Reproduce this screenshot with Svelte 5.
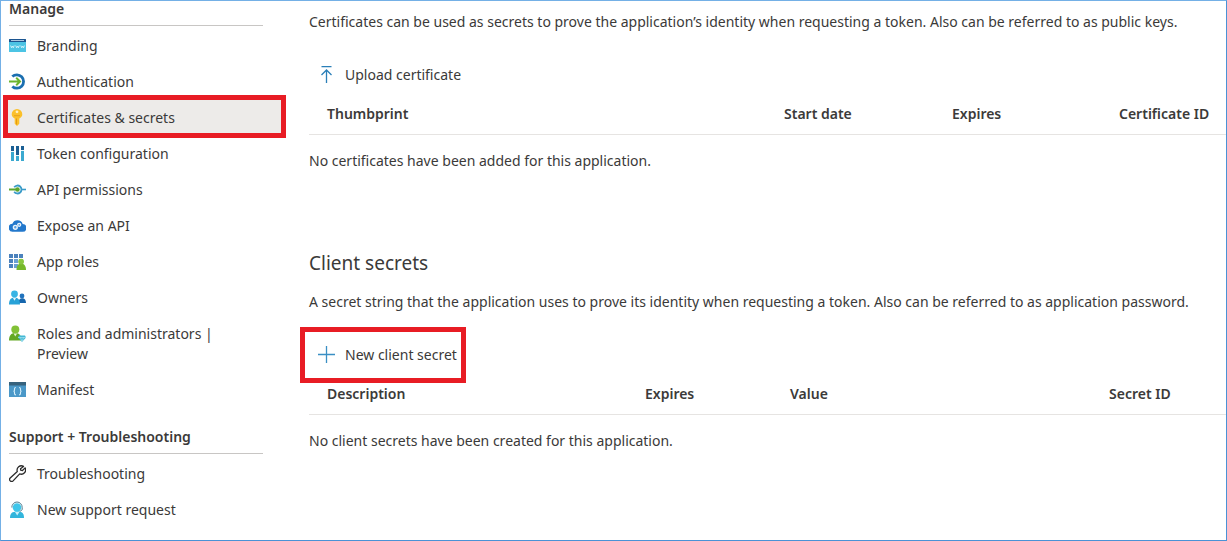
<script lang="ts">
  interface NavItem {
    icon: string;
    label: string;
    active?: boolean;
  }

  interface Column {
    label: string;
    width?: number;
  }

  const manageItems: NavItem[] = [
    { icon: "branding", label: "Branding" },
    { icon: "auth", label: "Authentication" },
    { icon: "key", label: "Certificates & secrets", active: true },
    { icon: "token", label: "Token configuration" },
    { icon: "permissions", label: "API permissions" },
    { icon: "cloud", label: "Expose an API" },
    { icon: "approles", label: "App roles" },
    { icon: "owners", label: "Owners" },
    { icon: "admin", label: "Roles and administrators | Preview" },
    { icon: "manifest", label: "Manifest" },
  ];

  const supportItems: NavItem[] = [
    { icon: "wrench", label: "Troubleshooting" },
    { icon: "support", label: "New support request" },
  ];

  const certificateColumns: Column[] = [
    { label: "Thumbprint" },
    { label: "Start date", width: 168 },
    { label: "Expires", width: 167 },
    { label: "Certificate ID", width: 125 },
  ];

  const secretColumns: Column[] = [
    { label: "Description" },
    { label: "Expires", width: 145 },
    { label: "Value", width: 319 },
    { label: "Secret ID", width: 135 },
  ];
</script>

{#snippet icon(name: string)}
  <svg class="icon" viewBox="0 0 17 17" aria-hidden="true">
    {#if name === "branding"}
      <rect y="2" width="17" height="13" rx="0.6" fill="#4cc4e4" />
      <path d="M0 5V2.600Q0 2 .6 2h15.800q.6 0 .6.600V5z" fill="#1c5590" />
      <rect x="2" y="3.200" width="13" height="0.800" fill="#cfe4f2" />
      <path
        d="M1.600 8.500l.9 2.300.9-1.800.9 1.800.9-2.300M6.700 8.500l.9 2.300.9-1.800.9 1.800.9-2.300M11.800 8.500l.9 2.300.9-1.800.9 1.800.9-2.300"
        fill="none"
        stroke="#d8f5fc"
        stroke-width="0.9"
      />
    {:else if name === "auth"}
      <path
        d="M3.300 3.600A6.700 6.700 0 1 1 3.300 13.400"
        fill="none"
        stroke="#1b6fb0"
        stroke-width="2.800"
      />
      <path
        d="M0 8.500h10.500M7.200 4.800l3.800 3.700-3.800 3.700"
        fill="none"
        stroke="#6bb42c"
        stroke-width="2"
      />
    {:else if name === "key"}
      <path
        d="M8 0a5.300 5.200 0 0 1 5.300 5.200c0 2-1.300 3.500-3 4.300v5.200L8 17l-2.300-2.300V9.500C4 8.700 2.700 7.200 2.700 5.200A5.300 5.200 0 0 1 8 0z"
        fill="#fbc02a"
      />
      <circle cx="8" cy="2.800" r="1.400" fill="#fff0c4" />
      <path d="M5 6.700h6" stroke="#e8a01c" />
      <path d="M7.500 9.500v6" stroke="#e59a12" />
    {:else if name === "token"}
      <path d="M3.500 1v15M8.500 1v15M13.500 1v15" stroke="#3aa9d0" stroke-width="3" />
      <path d="M3.500 1v5M8.500 1v9M13.500 1v4" stroke="#1b5f94" stroke-width="3" />
      <path d="M2 6.500h3M7 10.500h3M12 5.500h3" stroke="#e6f6fb" />
    {:else if name === "permissions"}
      <path
        d="M5.200 6.200A4 4 0 1 1 5.200 10.800"
        fill="none"
        stroke="#3a9bc8"
        stroke-width="1.800"
      />
      <path d="M12.500 8.500H17" stroke="#3a9bc8" stroke-width="1.600" />
      <path d="M0 8.500h7" stroke="#5ba52c" stroke-width="2" />
      <circle cx="8.500" cy="8.500" r="2.200" fill="#5ba52c" />
    {:else if name === "cloud"}
      <path
        d="M4 14.800a4 4 0 0 1-.6-8A5.500 5.500 0 0 1 13.700 7a3.900 3.900 0 0 1-.4 7.800z"
        fill="#2378cc"
      />
      <circle cx="6.300" cy="10.300" r="1.900" fill="#5aa0e0" stroke="#e9f3fc" stroke-width="1.400" />
      <circle cx="10.200" cy="7.800" r="1.500" fill="#5aa0e0" stroke="#e9f3fc" stroke-width="1.300" />
    {:else if name === "approles"}
      <path d="M0 1h4v4H0zM5 1h4v4H5zM10 1h4v4h-4zM0 6h4v4H0zM0 11h4v4H0z" fill="#4b82bd" />
      <path d="M5 6h4v4H5zM5 11h4v4H5zM10 6h4v4h-4z" fill="#6ba0d2" />
      <path d="M7.500 17c0-4 1.500-6.500 4.600-6.500S17 13 17 17z" fill="#76b82a" />
      <circle cx="12.100" cy="8.600" r="2.900" fill="#88c740" />
    {:else if name === "owners"}
      <path d="M9.500 14c0-3 1.200-4.800 3.700-4.800S17 11 17 14z" fill="#1666ad" />
      <circle cx="13" cy="7" r="2.400" fill="#2173bd" />
      <path d="M0 15.500C0 11 1.900 8.500 5.500 8.500S11 11 11 15.500z" fill="#28a2d8" />
      <path d="M3.800 8.800l1.700 3 1.700-3z" fill="#e6f6fc" />
      <circle cx="5.500" cy="5" r="3.400" fill="#38b4e4" />
    {:else if name === "admin"}
      <path d="M0 15.500C0 10.500 2 8 6.200 8s6.300 2.500 6.300 7.500z" fill="#62a823" />
      <path d="M4.500 8.200L6.300 11.500l1.900-3.300z" fill="#e2f3d0" />
      <circle cx="6.300" cy="4.500" r="4" fill="#82c136" />
      <path d="M10 10.500h6l1 2-4 4.500-4-4.500z" fill="#42b8d5" />
      <path d="M9 12.500h8M11.500 12.500L13 17l1.500-4.500" fill="none" stroke="#b9eaf3" stroke-width="0.6" />
    {:else if name === "manifest"}
      <rect y="1" width="17" height="15" fill="#4b98c8" />
      <rect y="1" width="17" height="3.500" fill="#37637e" />
      <path
        d="M6.900 6.500q-1.400 0-1.400 1.300v1.200q0 1-.9 1.200.9.200.9 1.200v1.200q0 1.300 1.400 1.300M10.100 6.500q1.400 0 1.400 1.300v1.200q0 1 .9 1.200-.9.200-.9 1.200v1.200q0 1.300-1.400 1.300"
        fill="none"
        stroke="#d5eefa"
        stroke-width="1.100"
      />
    {:else if name === "wrench"}
      <path
        d="M14.500 1.400A4.300 4.300 0 0 0 8.300 6.500L1.200 13a2 2 0 0 0 2.900 2.900L10.700 8.900a4.300 4.300 0 0 0 5.400-6L13.500 5.500 11.700 5.200 11.500 3.700z"
        fill="none"
        stroke="#2b2b2b"
        stroke-width="1.300"
        stroke-linejoin="round"
      />
    {:else if name === "support"}
      <path d="M1 17c0-4.500 2-6.500 7.200-6.500S15 12.500 15 17z" fill="#32b5dc" />
      <path d="M6 11l2.200 3.400 2.200-3.400z" fill="#c8f0fa" />
      <circle cx="8" cy="6.500" r="4.300" fill="#3fc6ea" />
      <path d="M2.800 6.500a5.200 5.500 0 0 1 10.400 0v2.200l-2.500 2" fill="none" stroke="#4f7d91" />
    {:else if name === "upload"}
      <path
        d="M3.500 0.500h10M8.500 17V4M3.500 9l5-5 5 5"
        fill="none"
        stroke="#2b7fb8"
        stroke-width="1.300"
      />
    {:else if name === "plus"}
      <path d="M8.500 0v17M0 8.500h17" stroke="#3a8fc4" stroke-width="1.300" />
    {/if}
  </svg>
{/snippet}

{#snippet navList(title: string, items: NavItem[])}
  <h2>{title}</h2>
  <ul>
    {#each items as item}
      <li>
        <a href="#{item.icon}" class:active={item.active} aria-current={item.active ? "page" : undefined}>
          {@render icon(item.icon)}
          <span>{item.label}</span>
        </a>
      </li>
    {/each}
  </ul>
{/snippet}

{#snippet dataTable(columns: Column[], empty: string)}
  <table>
    <colgroup>
      {#each columns as column}
        <col style:width={column.width ? `${column.width}px` : undefined} />
      {/each}
    </colgroup>
    <thead>
      <tr>
        {#each columns as column}
          <th scope="col">{column.label}</th>
        {/each}
      </tr>
    </thead>
    <tbody>
      <tr>
        <td colspan={columns.length}>{empty}</td>
      </tr>
    </tbody>
  </table>
{/snippet}

<div class="portal">
  <nav>
    {@render navList("Manage", manageItems)}
    {@render navList("Support + Troubleshooting", supportItems)}
  </nav>

  <main>
    <section>
      <p>
        Certificates can be used as secrets to prove the application’s identity when requesting a
        token. Also can be referred to as public keys.
      </p>
      <button type="button">
        {@render icon("upload")}
        Upload certificate
      </button>
      {@render dataTable(
        certificateColumns,
        "No certificates have been added for this application.",
      )}
    </section>

    <section>
      <h1>Client secrets</h1>
      <p>
        A secret string that the application uses to prove its identity when requesting a token.
        Also can be referred to as application password.
      </p>
      <button type="button" class="marked">
        {@render icon("plus")}
        New client secret
      </button>
      {@render dataTable(
        secretColumns,
        "No client secrets have been created for this application.",
      )}
    </section>
  </main>
</div>

<style>
  :global(body) {
    margin: 0;
    background: #fff;
  }

  .portal {
    --mark: #e81c24;
    --text: #3b3a39;

    box-sizing: border-box;
    display: flex;
    min-height: 100vh;
    border: 1px solid #4a92d6;
    border-top-color: #74b0e6;
    border-left-color: #74b0e6;
    font-family: "Noto Sans", "Open Sans", sans-serif;
    font-size: 14px;
    line-height: 20px;
    color: var(--text);
  }

  nav {
    flex: none;
    width: 273px;
    padding: 0 28px 0 7px;
  }

  h2 {
    margin: 0 18px 2px 1px;
    padding-bottom: 8px;
    border-bottom: 1px solid #c8c6c4;
    font-size: 14px;
    line-height: 16px;
    font-weight: 600;
  }

  ul {
    margin: 0 0 21px;
    padding: 0;
    list-style: none;

    &:last-child {
      margin-bottom: 0;
    }
  }

  a {
    position: relative;
    display: flex;
    gap: 11px;
    padding: 8px 48px 8px 1px;
    color: inherit;
    text-decoration: none;

    &.active {
      background: #edebe9;
    }

    &.active::after {
      content: "";
      position: absolute;
      inset: -5px -5px -2px;
      border: 5px solid var(--mark);
    }
  }

  .icon {
    flex: none;
    width: 17px;
    height: 17px;
    margin-top: 1px;
  }

  main {
    flex: 1;
    min-width: 0;
    padding-top: 11px;
  }

  section + section {
    margin-top: 62px;
  }

  h1 {
    margin: 0 0 15px;
    font-size: 19px;
    line-height: 28px;
    font-weight: 400;
  }

  p {
    margin: 0 0 25px;
  }

  button {
    position: relative;
    display: flex;
    gap: 10px;
    margin-bottom: 1px;
    padding: 8px 9px;
    border: none;
    background: none;
    font: inherit;
    color: inherit;
    cursor: pointer;

    &.marked::after {
      content: "";
      position: absolute;
      inset: -10px 0 -10px -9px;
      border: 5px solid var(--mark);
    }
  }

  table {
    width: 100%;
    table-layout: fixed;
    border-collapse: separate;
    border-spacing: 0;
  }

  th {
    padding: 10px 0 10px 18px;
    border-bottom: 1px solid #e6e4e2;
    font-weight: 600;
    text-align: left;
    white-space: nowrap;
  }

  td {
    padding: 16px 0;
  }
</style>
